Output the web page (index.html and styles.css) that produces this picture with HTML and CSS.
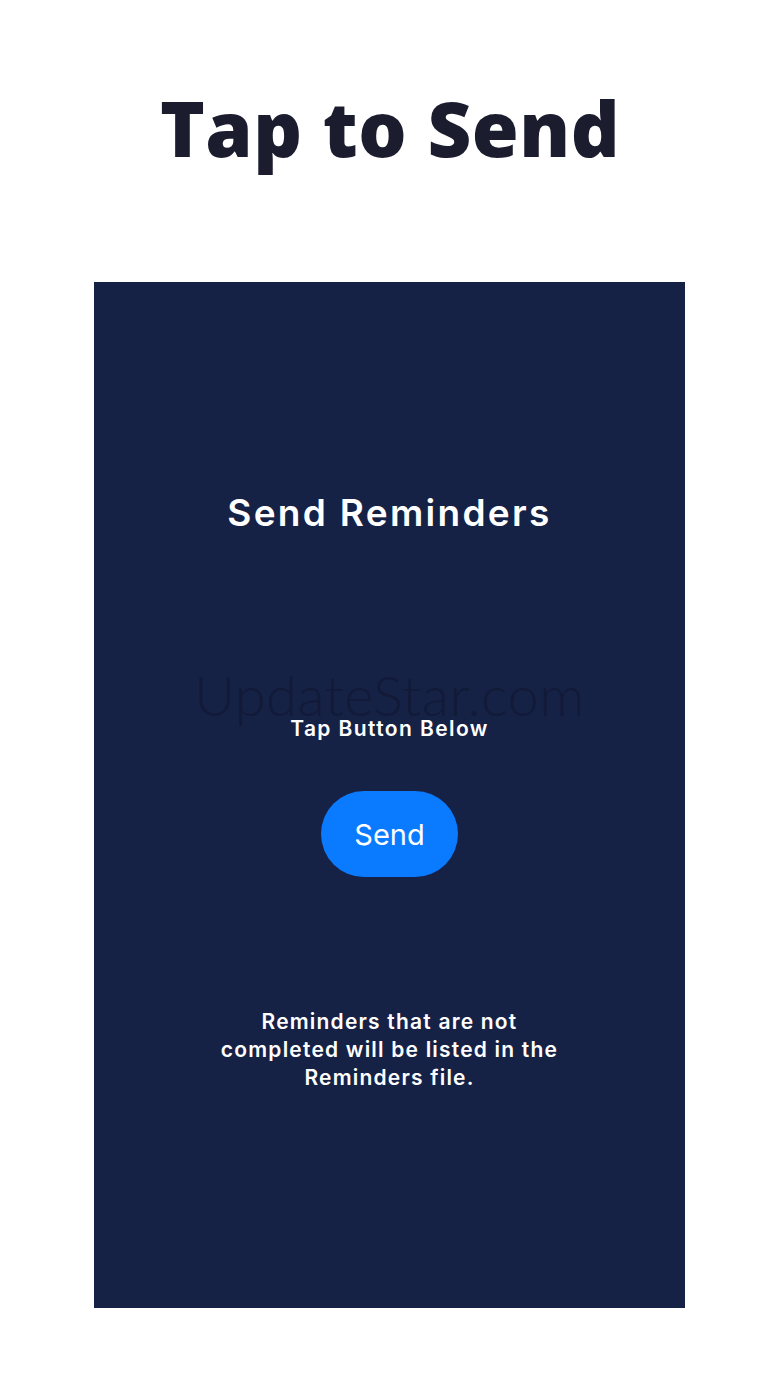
FILE: index.html
```html
<!DOCTYPE html>
<html lang="en">
<head>
<meta charset="utf-8">
<title>Tap to Send</title>
<link rel="stylesheet" href="styles.css">
</head>
<body>
<header class="hero">
  <h1 class="hero-title">Tap to Send</h1>
</header>
<main class="panel">
  <h2 class="panel-title">Send Reminders</h2>
  <div class="tap-area">
    <span class="watermark">UpdateStar.com</span>
    <p class="tap-label">Tap Button Below</p>
  </div>
  <button class="send-btn" type="button">Send</button>
  <p class="note">Reminders that are not<br>completed will be listed in the<br>Reminders file.</p>
</main>
</body>
</html>
```
FILE: styles.css
```css
html, body {
  margin: 0;
  padding: 0;
  background: #ffffff;
}
body {
  width: 780px;
  height: 1387px;
  overflow: hidden;
}
.hero {
  height: 282px;
  display: flex;
  justify-content: center;
  padding-top: 81px;
  box-sizing: border-box;
}
.hero-title {
  margin: 0;
  font-family: "Open Sans", sans-serif;
  font-weight: 800;
  font-size: 76px;
  line-height: 94px;
  color: #1b1c2e;
  letter-spacing: 0.5px;
}
.panel {
  width: 591px;
  height: 1026px;
  margin: 0 0 0 94px;
  background: #162146;
  display: flex;
  flex-direction: column;
  align-items: center;
  box-sizing: border-box;
  padding-top: 206px;
  color: #ffffff;
  font-family: "Inter", sans-serif;
}
.panel-title {
  margin: 0;
  font-weight: 600;
  font-size: 37px;
  line-height: 50px;
  letter-spacing: 2.3px;
}
.tap-area {
  position: relative;
  margin-top: 177px;
  display: flex;
  justify-content: center;
}
.watermark {
  position: absolute;
  left: 50%;
  top: -54px;
  transform: translateX(-50%);
  font-family: "Lato", sans-serif;
  font-weight: 300;
  font-size: 56px;
  white-space: nowrap;
  color: #121a38;
  letter-spacing: 0.5px;
}
.tap-label {
  position: relative;
  margin: 0;
  font-weight: 600;
  font-size: 21px;
  line-height: 28px;
  letter-spacing: 1.4px;
}
.send-btn {
  margin-top: 48px;
  width: 137px;
  height: 86px;
  border: none;
  border-radius: 43px;
  background: #0a7aff;
  color: #ffffff;
  font-family: "Inter", sans-serif;
  font-size: 29px;
  font-weight: 400;
  padding: 0;
}
.note {
  margin: 131px 0 0;
  font-weight: 600;
  font-size: 21px;
  line-height: 28px;
  text-align: center;
  letter-spacing: 1.2px;
}
```
